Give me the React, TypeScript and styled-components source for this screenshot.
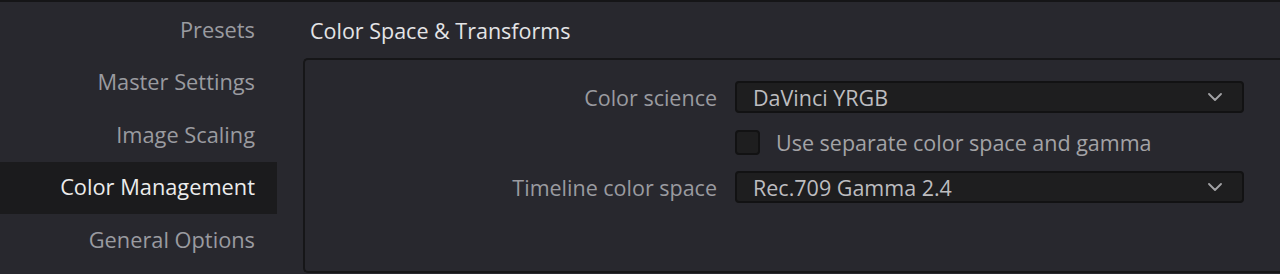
import { ReactElement } from 'react'
import styled, { createGlobalStyle } from 'styled-components'

const GlobalStyle = createGlobalStyle`
  html, body {
    margin: 0;
    padding: 0;
    background: #28282e;
    font-family: 'Open Sans', 'Noto Sans', sans-serif;
  }
  * { box-sizing: border-box; }
`

const sections = ['Presets', 'Master Settings', 'Image Scaling', 'Color Management', 'General Options']

const Chevron = (): ReactElement => (
  <svg width='14' height='8' viewBox='0 0 14 8' fill='none'>
    <path d='M1 1L7 7L13 1' stroke='#a3a3a6' strokeWidth='1.8' strokeLinecap='round' strokeLinejoin='round' />
  </svg>
)

type SelectProps = {
  value: string
}

const Select = ({ value }: SelectProps): ReactElement => (
  <SelectBox>
    <span>{value}</span>
    <Chevron />
  </SelectBox>
)

export default function App (): ReactElement {
  return (
    <>
      <GlobalStyle />
      <Window>
        <Sidebar>
          {sections.map((s) => (
            <NavItem key={s} active={s === 'Color Management'}>{s}</NavItem>
          ))}
        </Sidebar>
        <Main>
          <Heading>Color Space &amp; Transforms</Heading>
          <Panel>
            <Form>
              <Label>Color science</Label>
              <Select value='DaVinci YRGB' />
              <span />
              <CheckRow>
                <CheckBox />
                <CheckText>Use separate color space and gamma</CheckText>
              </CheckRow>
              <Label>Timeline color space</Label>
              <Select value='Rec.709 Gamma 2.4' />
            </Form>
          </Panel>
        </Main>
      </Window>
    </>
  )
}

const Window = styled.div`
  display: flex;
  height: 274px;
  border-top: 2px solid #151517;
  overflow: hidden;
`

const Sidebar = styled.nav`
  width: 277px;
  flex-shrink: 0;
  display: flex;
  flex-direction: column;
  padding-top: 2px;
`

const NavItem = styled.div<{ active?: boolean }>`
  height: 52.5px;
  display: flex;
  align-items: center;
  justify-content: flex-end;
  padding-right: 22px;
  padding-bottom: 2px;
  font-size: 21.8px;
  color: ${({ active }) => (active ? '#ececec' : '#9a9ba0')};
  background: ${({ active }) => (active ? '#1b1b1d' : 'transparent')};
`

const Main = styled.div`
  flex: 1;
  display: flex;
  flex-direction: column;
  padding-left: 26px;
`

const Heading = styled.h2`
  margin: 0;
  height: 56px;
  display: flex;
  align-items: center;
  padding-left: 7px;
  font-size: 21.5px;
  font-weight: 400;
  color: #e4e4e6;
`

const Panel = styled.section`
  height: 215px;
  border: 2px solid #161618;
  border-right: none;
  border-radius: 5px 0 0 5px;
  padding-top: 21px;
`

const Form = styled.div`
  display: grid;
  grid-template-columns: 412px 509px;
  grid-auto-rows: 32px;
  column-gap: 18px;
  row-gap: 13px;
  align-items: center;
`

const Label = styled.div`
  text-align: right;
  font-size: 21.5px;
  color: #9a9ba0;
`

const SelectBox = styled.div`
  height: 32px;
  display: flex;
  align-items: center;
  justify-content: space-between;
  padding: 0 20px 0 16px;
  background: #1e1e1f;
  border: 2px solid #121213;
  border-radius: 4px;
  font-size: 21.5px;
  color: #bdbdc0;
`

const CheckRow = styled.div`
  display: flex;
  align-items: center;
  gap: 16px;
`

const CheckBox = styled.div`
  width: 25px;
  height: 25px;
  background: #1e1e1f;
  border: 2px solid #121213;
  border-radius: 4px;
`

const CheckText = styled.span`
  font-size: 21.5px;
  color: #a3a3a6;
`
